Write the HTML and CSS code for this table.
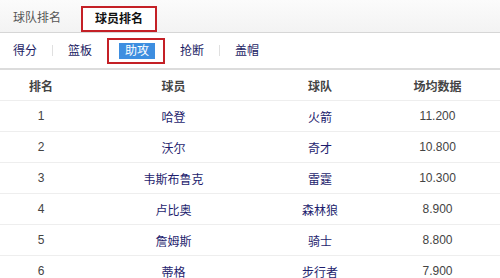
FILE: index.html
```html
<!DOCTYPE html>
<html lang="zh-CN">
<head>
<meta charset="utf-8">
<title>球员排名</title>
<link rel="stylesheet" href="styles.css">
</head>
<body>
<div class="panel">
  <div class="tabs">
    <div class="tab">球队排名</div>
    <div class="tab active">球员排名</div>
  </div>
  <div class="subtabs">
    <div class="sub first">得分</div>
    <div class="sep"></div>
    <div class="sub">篮板</div>
    <div class="sep"></div>
    <div class="sub current"><span class="hl">助攻</span></div>
    <div class="sep"></div>
    <div class="sub">抢断</div>
    <div class="sep"></div>
    <div class="sub">盖帽</div>
  </div>
  <table class="rank">
    <thead>
      <tr><th class="c1">排名</th><th class="c2">球员</th><th class="c3">球队</th><th class="c4">场均数据</th></tr>
    </thead>
    <tbody>
      <tr><td>1</td><td class="name">哈登</td><td class="name">火箭</td><td>11.200</td></tr>
      <tr><td>2</td><td class="name">沃尔</td><td class="name">奇才</td><td>10.800</td></tr>
      <tr><td>3</td><td class="name">韦斯布鲁克</td><td class="name">雷霆</td><td>10.300</td></tr>
      <tr><td>4</td><td class="name">卢比奥</td><td class="name">森林狼</td><td>8.900</td></tr>
      <tr><td>5</td><td class="name">詹姆斯</td><td class="name">骑士</td><td>8.800</td></tr>
      <tr><td>6</td><td class="name">蒂格</td><td class="name">步行者</td><td>7.900</td></tr>
    </tbody>
  </table>
</div>
</body>
</html>
```
FILE: styles.css
```css
html, body {
  margin: 0;
  padding: 0;
  background: #ffffff;
}
body {
  font-family: "Liberation Sans", "Noto Sans CJK SC", sans-serif;
  font-size: 12px;
  color: #333333;
}
.panel {
  width: 500px;
  overflow: hidden;
}
.tabs {
  display: flex;
  align-items: flex-end;
  height: 32px;
  background: linear-gradient(#fbfbfb, #f3f3f3);
  border-bottom: 1px solid #d6d6d6;
}
.tab {
  box-sizing: border-box;
  height: 26px;
  line-height: 24px;
  padding: 0 14px 0 13px;
  color: #555555;
  font-size: 12px;
}
.tab.active {
  margin-left: 6px;
  background: #ffffff;
  color: #111111;
  border: 2px solid #c42026;
  padding: 0 12px;
  width: 76px;
  font-weight: bold;
  line-height: 22px;
}
.subtabs {
  display: flex;
  align-items: center;
  height: 35px;
  border-bottom: 2px solid #dcdcdc;
}
.sub {
  padding: 0 15px;
  line-height: 16px;
  color: #1c1c64;
}
.sub.first {
  padding-left: 13px;
}
.sep {
  width: 1px;
  height: 11px;
  background: #e0e0e0;
}
.sub.current {
  box-sizing: border-box;
  height: 26px;
  width: 58px;
  margin: 0 -1px;
  padding: 0 0 0 10px;
  display: flex;
  align-items: center;
  border: 2px solid #c42026;
  position: relative;
}
.hl {
  background: #3d8ee0;
  color: #ffffff;
  padding: 0 6px;
  line-height: 16px;
}
.rank {
  width: 500px;
  border-collapse: collapse;
  table-layout: fixed;
}
.rank th, .rank td {
  height: 30px;
  padding: 0;
  text-align: center;
  border-bottom: 1px solid #eeeeee;
  font-size: 12px;
}
.rank th {
  color: #444444;
  font-weight: bold;
  height: 30px;
}
.c1 { width: 82px; }
.c2 { width: 183px; }
.c3 { width: 110px; }
.c4 { width: 125px; }
.rank td {
  color: #444444;
}
.rank td.name {
  color: #1e1e6e;
}
```
